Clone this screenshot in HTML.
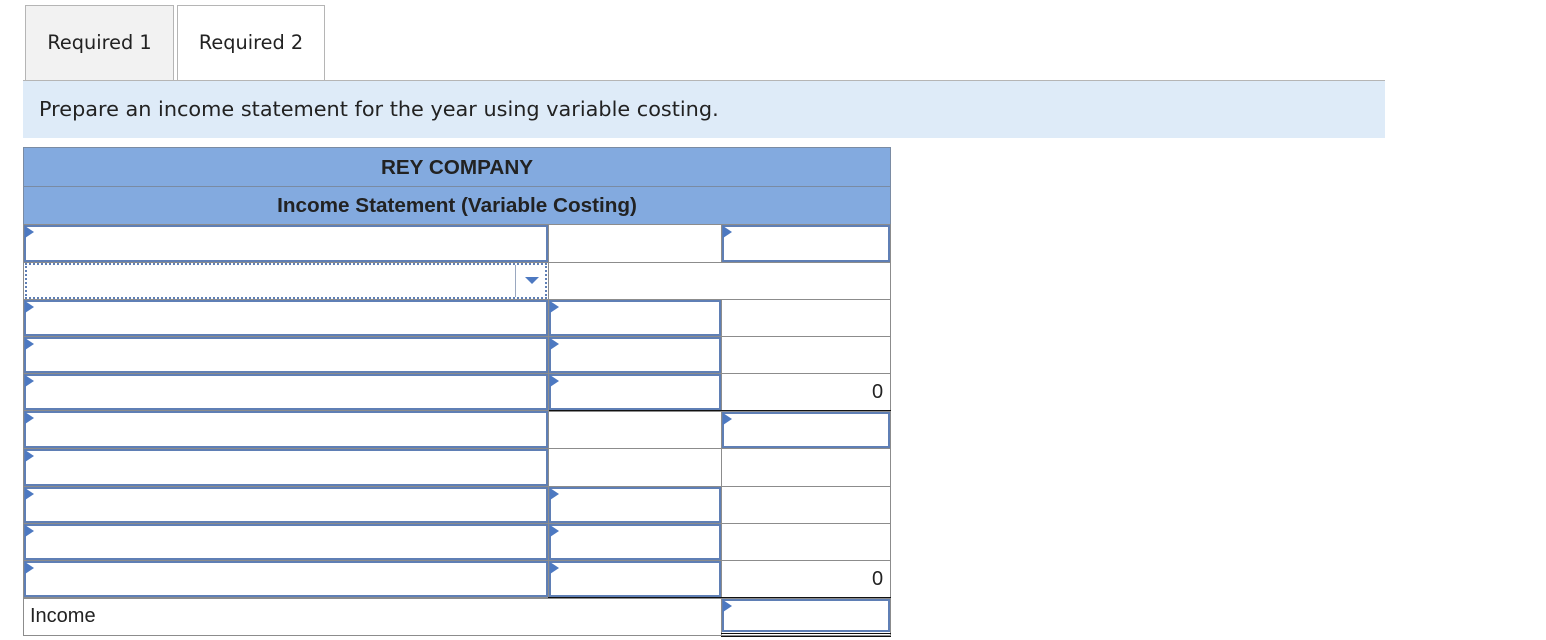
<!DOCTYPE html>
<html><head><meta charset="utf-8"><style>
*{box-sizing:border-box;margin:0;padding:0}
body{width:1546px;height:640px;background:#fff;position:relative;overflow:hidden;font-family:"DejaVu Sans","Liberation Sans",sans-serif}
.a{position:absolute}
.tab{position:absolute;top:5px;height:76px;border:1px solid #b5b5b5;font-size:19.3px;color:#222;padding-top:25px;text-align:center}
.c{position:absolute;border:1px solid #8c8c8c;background:#fff}
.in{position:absolute;border:2px solid #5f7fb5;background:#fff}
.in::before{content:"";position:absolute;left:-1px;top:-1px;border-left:9px solid #4d79c1;border-top:6px solid transparent;border-bottom:6px solid transparent}
.h{position:absolute;left:23px;width:868px;background:#83aadf;border:1px solid #7a8ba3;font-family:"Liberation Sans",sans-serif;font-weight:bold;font-size:20.7px;color:#222;text-align:center}
.num{position:absolute;font-family:"Liberation Sans",sans-serif;font-size:20px;color:#222}
</style></head><body>
<div class="tab" style="left:25px;width:149px;background:#f2f2f2;">Required 1</div>
<div class="tab" style="left:177px;width:148px;background:#fff;border-bottom:none;height:77px">Required 2</div>
<div class="a" style="left:23px;top:80px;width:1362px;height:1px;background:#b5b5b5"></div>
<div class="a" style="left:23px;top:81px;width:1362px;height:57px;background:#deebf8;font-size:20.8px;color:#222;padding:16px 0 0 16px">Prepare an income statement for the year using variable costing.</div>
<div class="h" style="top:147px;height:40px;padding-top:8px">REY COMPANY</div>
<div class="h" style="top:186px;height:39px;padding-top:7px">Income Statement (Variable Costing)</div>

<div class="c" style="left:23px;top:224px;width:526px;height:39px"></div>
<div class="c" style="left:548px;top:224px;width:174px;height:39px"></div>
<div class="c" style="left:721px;top:224px;width:170px;height:39px"></div>
<div class="in" style="left:24px;top:225px;width:524px;height:37px"></div>
<div class="in" style="left:722px;top:225px;width:168px;height:37px"></div>

<div class="c" style="left:23px;top:262px;width:526px;height:38px"></div>
<div class="c" style="left:548px;top:262px;width:343px;height:38px"></div>
<div class="a" style="left:25px;top:263px;width:522px;height:36px;border:2px dotted #5f7fb5;background:#fff"></div>
<div class="a" style="left:515px;top:265px;width:1px;height:32px;background:#9aa8c0"></div>
<div class="a" style="left:525px;top:277px;border-top:7px solid #4d79c1;border-left:7px solid transparent;border-right:7px solid transparent"></div>

<div class="c" style="left:23px;top:299px;width:526px;height:38px"></div><div class="c" style="left:548px;top:299px;width:174px;height:38px"></div><div class="c" style="left:721px;top:299px;width:170px;height:38px"></div>
<div class="in" style="left:24px;top:300px;width:524px;height:36px"></div><div class="in" style="left:549px;top:300px;width:172px;height:36px"></div>

<div class="c" style="left:23px;top:336px;width:526px;height:38px"></div><div class="c" style="left:548px;top:336px;width:174px;height:38px"></div><div class="c" style="left:721px;top:336px;width:170px;height:38px"></div>
<div class="in" style="left:24px;top:337px;width:524px;height:36px"></div><div class="in" style="left:549px;top:337px;width:172px;height:36px"></div>

<div class="c" style="left:23px;top:373px;width:526px;height:38px"></div><div class="c" style="left:548px;top:373px;width:174px;height:38px"></div><div class="c" style="left:721px;top:373px;width:170px;height:38px"></div>
<div class="in" style="left:24px;top:374px;width:524px;height:36px"></div><div class="in" style="left:549px;top:374px;width:172px;height:36px"></div>
<div class="num" style="left:872px;top:381px">0</div>
<div class="a" style="left:548px;top:410px;width:343px;height:2px;background:#111"></div>

<div class="c" style="left:23px;top:410px;width:526px;height:39px"></div><div class="c" style="left:548px;top:411px;width:174px;height:38px"></div><div class="c" style="left:721px;top:411px;width:170px;height:38px"></div>
<div class="in" style="left:24px;top:411px;width:524px;height:37px"></div><div class="in" style="left:722px;top:412px;width:168px;height:36px"></div>

<div class="c" style="left:23px;top:448px;width:526px;height:39px"></div><div class="c" style="left:548px;top:448px;width:174px;height:39px"></div><div class="c" style="left:721px;top:448px;width:170px;height:39px"></div>
<div class="in" style="left:24px;top:449px;width:524px;height:37px"></div>

<div class="c" style="left:23px;top:486px;width:526px;height:38px"></div><div class="c" style="left:548px;top:486px;width:174px;height:38px"></div><div class="c" style="left:721px;top:486px;width:170px;height:38px"></div>
<div class="in" style="left:24px;top:487px;width:524px;height:36px"></div><div class="in" style="left:549px;top:487px;width:172px;height:36px"></div>

<div class="c" style="left:23px;top:523px;width:526px;height:38px"></div><div class="c" style="left:548px;top:523px;width:174px;height:38px"></div><div class="c" style="left:721px;top:523px;width:170px;height:38px"></div>
<div class="in" style="left:24px;top:524px;width:524px;height:36px"></div><div class="in" style="left:549px;top:524px;width:172px;height:36px"></div>

<div class="c" style="left:23px;top:560px;width:526px;height:38px"></div><div class="c" style="left:548px;top:560px;width:174px;height:38px"></div><div class="c" style="left:721px;top:560px;width:170px;height:38px"></div>
<div class="in" style="left:24px;top:561px;width:524px;height:36px"></div><div class="in" style="left:549px;top:561px;width:172px;height:36px"></div>
<div class="num" style="left:872px;top:568px">0</div>
<div class="a" style="left:548px;top:597px;width:343px;height:2px;background:#111"></div>

<div class="c" style="left:23px;top:598px;width:699px;height:38px"></div><div class="c" style="left:721px;top:598px;width:170px;height:38px"></div>
<div class="num" style="left:30px;top:605px">Income</div>
<div class="in" style="left:722px;top:599px;width:168px;height:33px"></div>
<div class="a" style="left:721px;top:633px;width:170px;height:1px;background:#111"></div>
<div class="a" style="left:721px;top:636px;width:170px;height:1px;background:#111"></div>
</body></html>
